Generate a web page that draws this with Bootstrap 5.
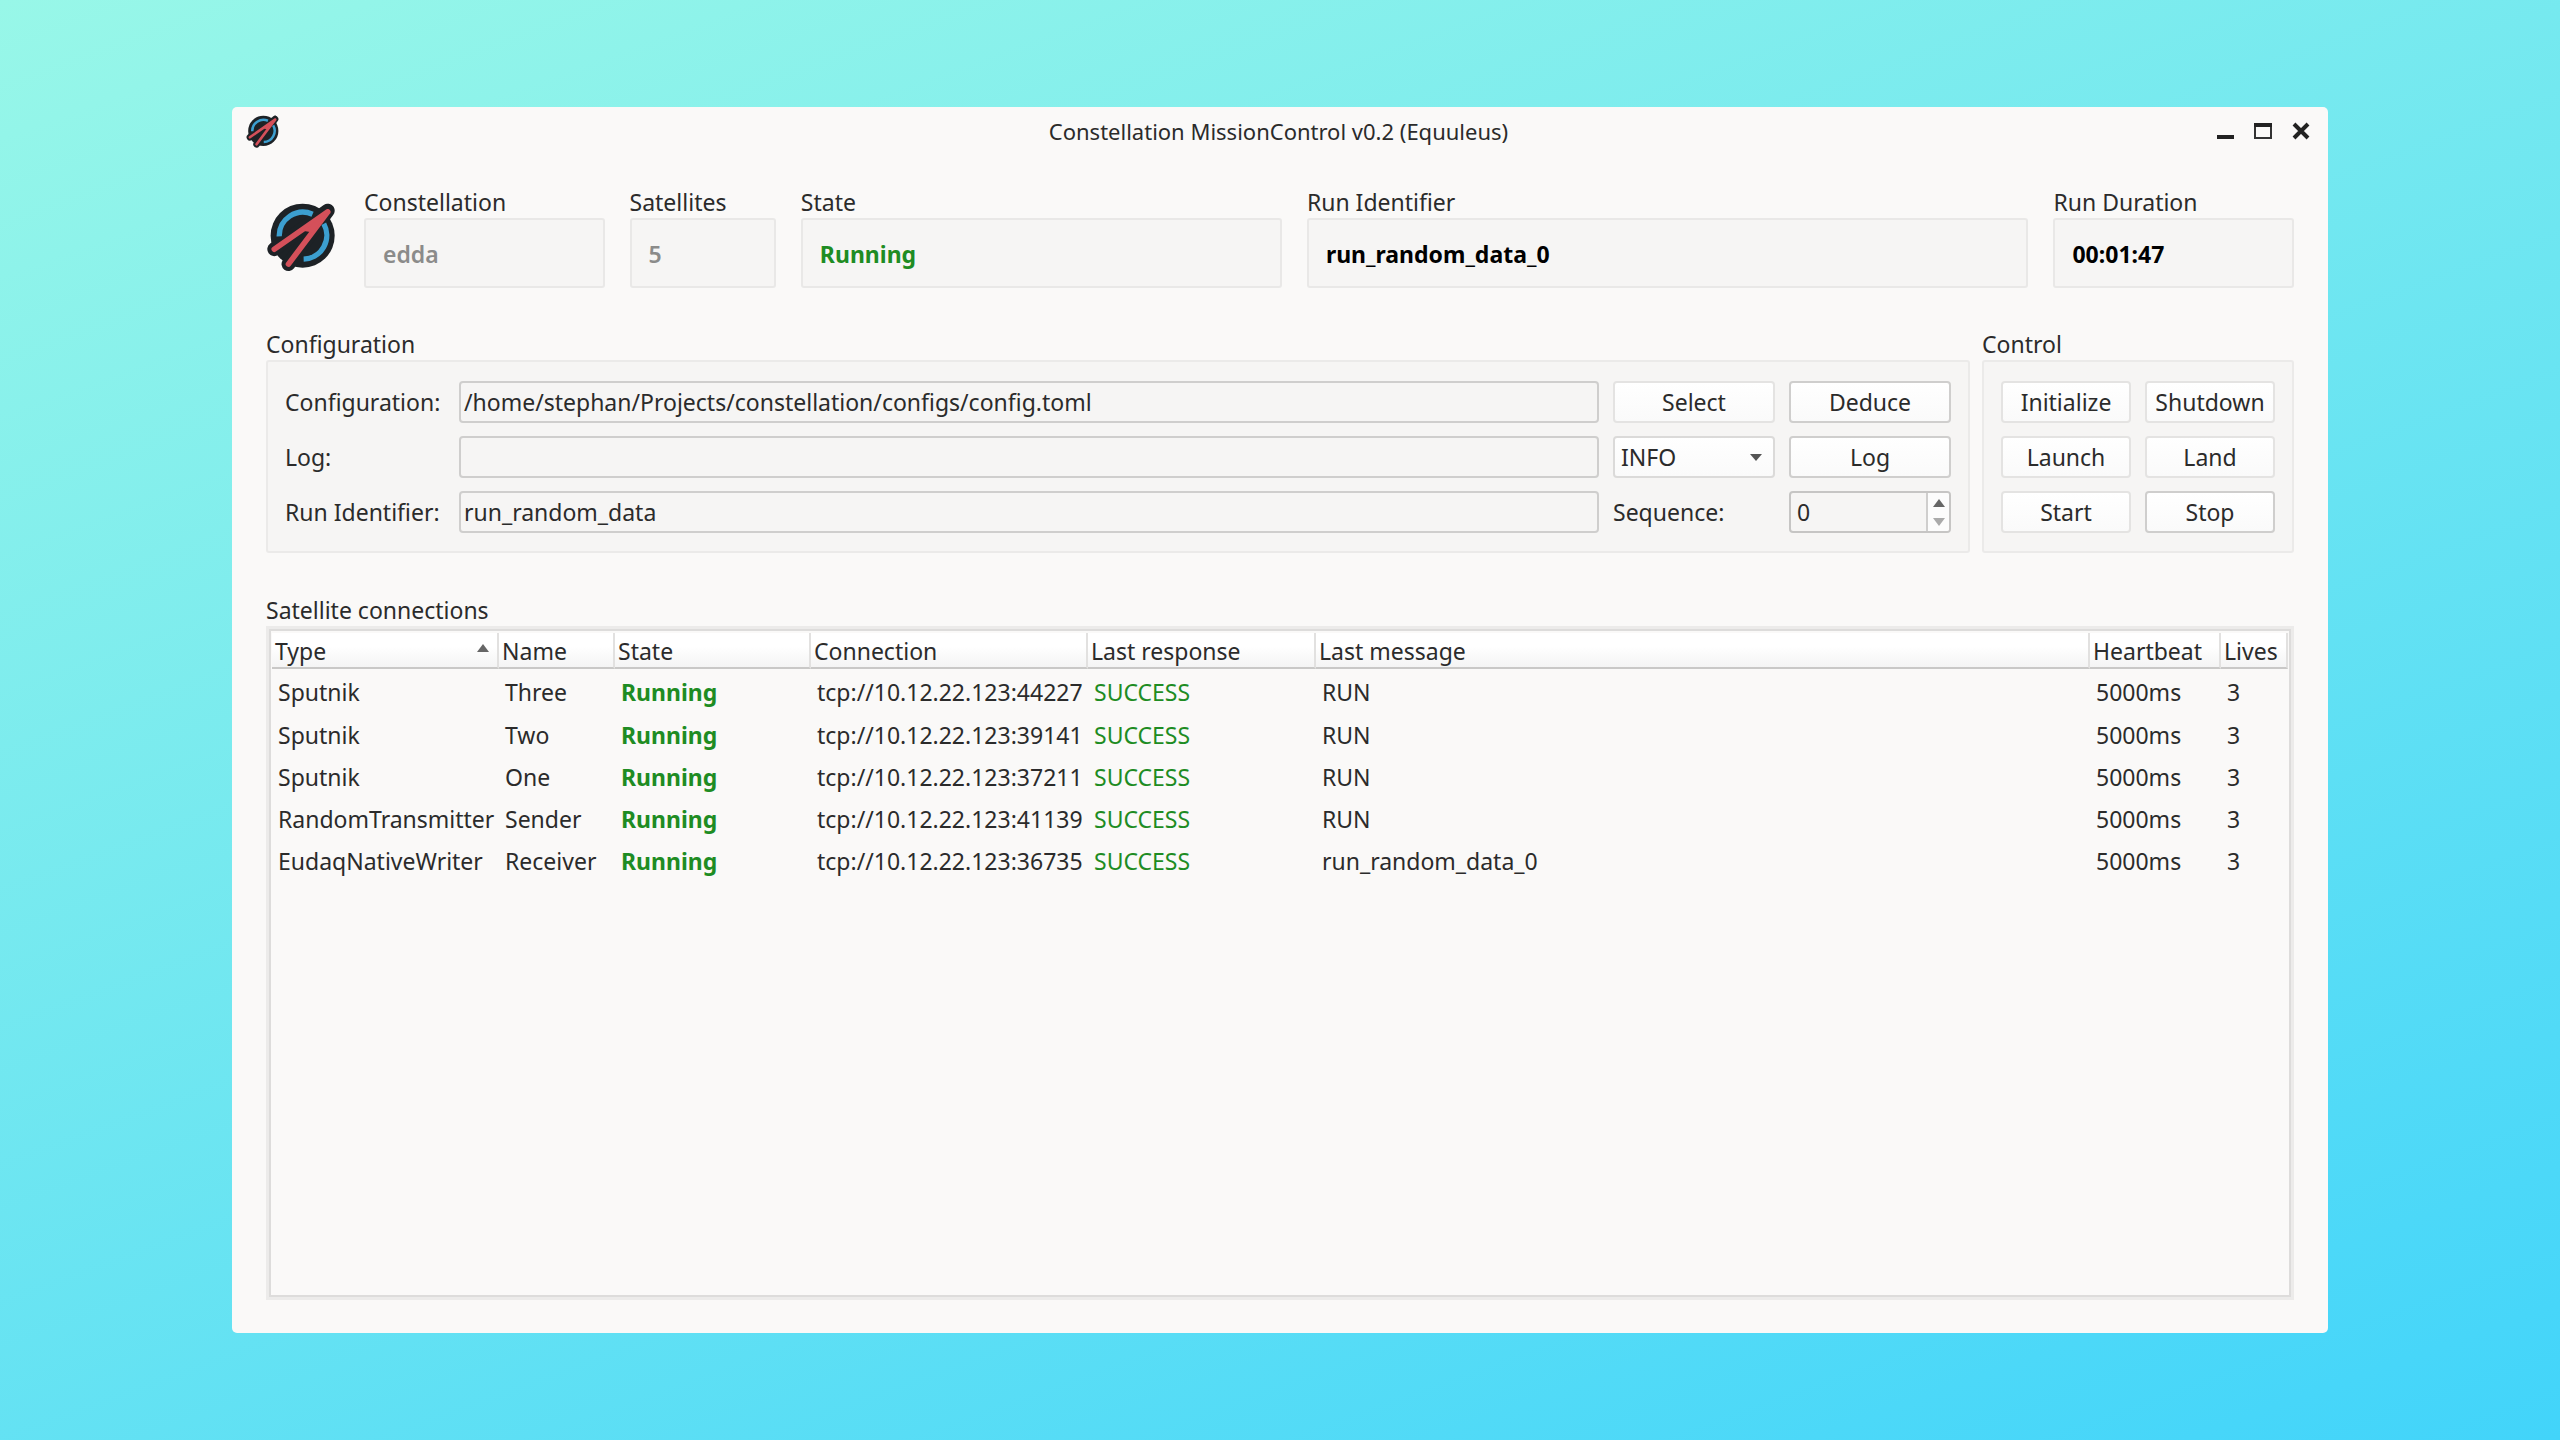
<!DOCTYPE html>
<html lang="en">
<head>
<meta charset="utf-8">
<meta name="viewport" content="width=device-width, initial-scale=1">
<title>Constellation MissionControl v0.2 (Equuleus)</title>
<link rel="stylesheet" href="https://cdn.jsdelivr.net/npm/bootstrap@5.3.0/dist/css/bootstrap.min.css">
<style>
  body {
    font-family: "Noto Sans", sans-serif;
    font-size: 23px;
    line-height: 32px;
    color: #2b2b2b;
    padding: 107px 232px;
    background: linear-gradient(160deg, #98f7e8 0%, #42d4fa 100%) fixed;
  }
  .app-window { background: #faf9f8; border-radius: 5px; }
  .title-bar { height: 48px; padding: 0 17px 0 14px; font-size: 22px; }
  .title-bar > * { flex: 1 1 0; }
  .win-keys { gap: 18px; }
  .win-btn { border: 0; background: none; padding: 0; width: 20px; height: 20px; display: flex; }
  .app-body { padding: 31px 34px 33px; }
  .app-logo { width: 70px; margin-right: 28px; }
  .status-row { gap: 25px; }
  .status-box {
    display: flex; align-items: center; height: 70px; padding: 2px 18px 0 17px;
    border: 2px solid #e9e8e7; border-radius: 3px; background: #f6f5f4; font-weight: 600;
  }
  .w-name { flex: 240 1 0; } .w-count { flex: 146 1 0; }
  .w-state { flex: 480 1 0; } .w-run { flex: 720 1 0; }
  .dim { color: #8b8b8a; }
  .ok { color: #1e8c23; }
  .middle-row { gap: 12px; margin: 40px 0 41px; }
  .panel { background: #f6f5f4; border: 2px solid #ebeae9; border-radius: 3px; padding: 19px 17px 18px; }
  .panel-grid { display: grid; gap: 13px 14px; grid-auto-rows: 42px; align-items: center; }
  .config-grid { grid-template-columns: 160px 1fr 162px 162px; }
  .control-grid { grid-template-columns: 130px 130px; }
  .field, .tool-btn, .level {
    height: 42px; border: 2px solid #cfcecd; border-radius: 4px; color: #2b2b2b;
    font-size: 23px; line-height: 32px; padding: 0 3px; width: 100%; min-width: 0;
  }
  .field { background: #f6f5f4; }
  .tool-btn { background: linear-gradient(#fff, #fafafa); text-align: center; padding: 0; }
  .tool-btn.flat { border-color: #e4e3e2; }
  .level {
    appearance: none; padding-left: 6px; border-color: #dbdad9;
    background: url("data:image/svg+xml,%3Csvg xmlns='http://www.w3.org/2000/svg' viewBox='0 0 12 7'%3E%3Cpath d='M0 0h12L6 7z' fill='%23555'/%3E%3C/svg%3E") no-repeat right 11px center / 12px 7px, linear-gradient(#fff, #fafafa);
  }
  .spin { display: flex; height: 42px; border: 2px solid #c6c5c4; border-radius: 4px; overflow: hidden; background: #f6f5f4; }
  .spin input { flex: 1; min-width: 0; border: 0; background: none; padding: 0 6px; color: #2b2b2b; appearance: textfield; }
  .spin input::-webkit-inner-spin-button { appearance: none; }
  .spin-keys { width: 23px; border-left: 2px solid #cfcecd; background: #fcfcfc; display: flex; flex-direction: column; }
  .spin-keys button { flex: 1; border: 0; background: none; padding: 0; display: flex; align-items: center; justify-content: center; }
  .table-frame { border: 3px solid #ecebea; outline: 2px solid #dddcdb; outline-offset: -5px; padding: 4px 3px 3px; flex: 1; }
  .sat-table { width: 100%; table-layout: fixed; border-collapse: separate; border-spacing: 0; white-space: nowrap; }
  .sat-table th {
    font-weight: 400; height: 36px; padding: 3px 0 0 3px; line-height: 31px;
    background: linear-gradient(#fff 40%, #f4f4f4); border-bottom: 2px solid #c9c8c7; border-right: 2px solid #e2e1e0;
  }
  .sat-table td { height: 42px; padding: 0 0 0 6px; }
  .sat-table tbody tr:first-child td { height: 45px; }
  .sat-table .ok-strong { color: #1e8c23; font-weight: 700; }
</style>
<script src="https://cdn.jsdelivr.net/npm/bootstrap@5.3.0/dist/js/bootstrap.bundle.min.js"></script>
</head>
<body class="min-vh-100 d-flex flex-column">
<svg class="d-none" aria-hidden="true">
  <symbol id="logo" viewBox="126 300 210 212">
    <circle cx="236" cy="402" r="97" fill="#1d2226"/>
    <path d="M312 326 150 443M312 326 193 488" stroke="#1d2226" stroke-width="42" stroke-linecap="round"/>
    <path d="M165 404A72 72 0 0 1 266 337M300 366A72 72 0 0 1 239 473" fill="none" stroke="#3c9fd0" stroke-width="16"/>
    <path d="M312 330 150 443M312 330 193 488" stroke="#d4505a" stroke-width="17" stroke-linecap="round"/>
    <path d="M314 328 240 388 268 392Z" fill="#d4505a"/>
  </symbol>
</svg>
<main class="app-window flex-grow-1 d-flex flex-column">
  <header class="title-bar d-flex align-items-center">
    <div class="d-flex"><svg width="33" height="33" aria-hidden="true"><use href="#logo"/></svg></div>
    <div class="text-center text-nowrap">Constellation MissionControl v0.2 (Equuleus)</div>
    <div class="win-keys d-flex justify-content-end">
      <button class="win-btn" aria-label="Minimize"><svg width="20" height="20"><path d="M2 16h17" stroke="#222" stroke-width="4"/></svg></button>
      <button class="win-btn" aria-label="Maximize"><svg width="20" height="20"><path d="M2 4v13h16V4" fill="none" stroke="#333" stroke-width="2"/><path d="M1 4h18" stroke="#222" stroke-width="4"/></svg></button>
      <button class="win-btn" aria-label="Close"><svg width="20" height="20"><path d="M3 3 17 17M17 3 3 17" stroke="#222" stroke-width="4"/></svg></button>
    </div>
  </header>
  <div class="app-body flex-grow-1 d-flex flex-column">
    <section class="d-flex align-items-center">
      <svg class="app-logo flex-shrink-0" height="70" aria-hidden="true"><use href="#logo"/></svg>
      <div class="status-row d-flex flex-grow-1">
        <div class="w-name"><label class="d-block" for="s1">Constellation</label><output id="s1" class="status-box dim">edda</output></div>
        <div class="w-count"><label class="d-block" for="s2">Satellites</label><output id="s2" class="status-box dim">5</output></div>
        <div class="w-state"><label class="d-block" for="s3">State</label><output id="s3" class="status-box ok fw-bold">Running</output></div>
        <div class="w-run"><label class="d-block" for="s4">Run Identifier</label><output id="s4" class="status-box fw-bold text-black">run_random_data_0</output></div>
        <div class="w-name"><label class="d-block" for="s5">Run Duration</label><output id="s5" class="status-box fw-bold text-black">00:01:47</output></div>
      </div>
    </section>
    <div class="middle-row d-flex">
      <section class="flex-grow-1">
        <div>Configuration</div>
        <div class="panel"><div class="panel-grid config-grid">
          <label class="text-nowrap" for="cfg">Configuration:</label>
          <input class="field" id="cfg" type="text" value="/home/stephan/Projects/constellation/configs/config.toml">
          <button class="tool-btn flat">Select</button>
          <button class="tool-btn">Deduce</button>
          <label for="log">Log:</label>
          <input class="field" id="log" type="text">
          <select class="level" aria-label="Log level"><option>INFO</option></select>
          <button class="tool-btn">Log</button>
          <label class="text-nowrap" for="run">Run Identifier:</label>
          <input class="field" id="run" type="text" value="run_random_data">
          <label for="seq">Sequence:</label>
          <div class="spin">
            <input id="seq" type="number" value="0">
            <div class="spin-keys">
              <button aria-label="Increase"><svg width="12" height="8"><path d="M0 8h12L6 0z" fill="#666"/></svg></button>
              <button aria-label="Decrease"><svg width="12" height="8"><path d="M0 0h12L6 8z" fill="#aaa"/></svg></button>
            </div>
          </div>
        </div></div>
      </section>
      <section>
        <div>Control</div>
        <div class="panel"><div class="panel-grid control-grid">
          <button class="tool-btn flat">Initialize</button><button class="tool-btn flat">Shutdown</button>
          <button class="tool-btn flat">Launch</button><button class="tool-btn flat">Land</button>
          <button class="tool-btn flat">Start</button><button class="tool-btn">Stop</button>
        </div></div>
      </section>
    </div>
    <div>Satellite connections</div>
    <div class="table-frame">
      <table class="sat-table">
        <colgroup><col style="width:227px"><col style="width:116px"><col style="width:196px"><col style="width:277px"><col style="width:228px"><col><col style="width:131px"><col style="width:67px"></colgroup>
        <thead><tr>
          <th><span class="d-flex justify-content-between pe-2">Type<svg width="12" height="8" class="mt-2"><path d="M0 8h12L6 0z" fill="#666"/></svg></span></th>
          <th>Name</th><th>State</th><th>Connection</th><th>Last response</th><th>Last message</th><th>Heartbeat</th><th>Lives</th>
        </tr></thead>
        <tbody>
          <tr><td>Sputnik</td><td>Three</td><td class="ok-strong">Running</td><td>tcp://10.12.22.123:44227</td><td class="ok">SUCCESS</td><td>RUN</td><td>5000ms</td><td>3</td></tr>
          <tr><td>Sputnik</td><td>Two</td><td class="ok-strong">Running</td><td>tcp://10.12.22.123:39141</td><td class="ok">SUCCESS</td><td>RUN</td><td>5000ms</td><td>3</td></tr>
          <tr><td>Sputnik</td><td>One</td><td class="ok-strong">Running</td><td>tcp://10.12.22.123:37211</td><td class="ok">SUCCESS</td><td>RUN</td><td>5000ms</td><td>3</td></tr>
          <tr><td>RandomTransmitter</td><td>Sender</td><td class="ok-strong">Running</td><td>tcp://10.12.22.123:41139</td><td class="ok">SUCCESS</td><td>RUN</td><td>5000ms</td><td>3</td></tr>
          <tr><td>EudaqNativeWriter</td><td>Receiver</td><td class="ok-strong">Running</td><td>tcp://10.12.22.123:36735</td><td class="ok">SUCCESS</td><td>run_random_data_0</td><td>5000ms</td><td>3</td></tr>
        </tbody>
      </table>
    </div>
  </div>
</main>
</body>
</html>
